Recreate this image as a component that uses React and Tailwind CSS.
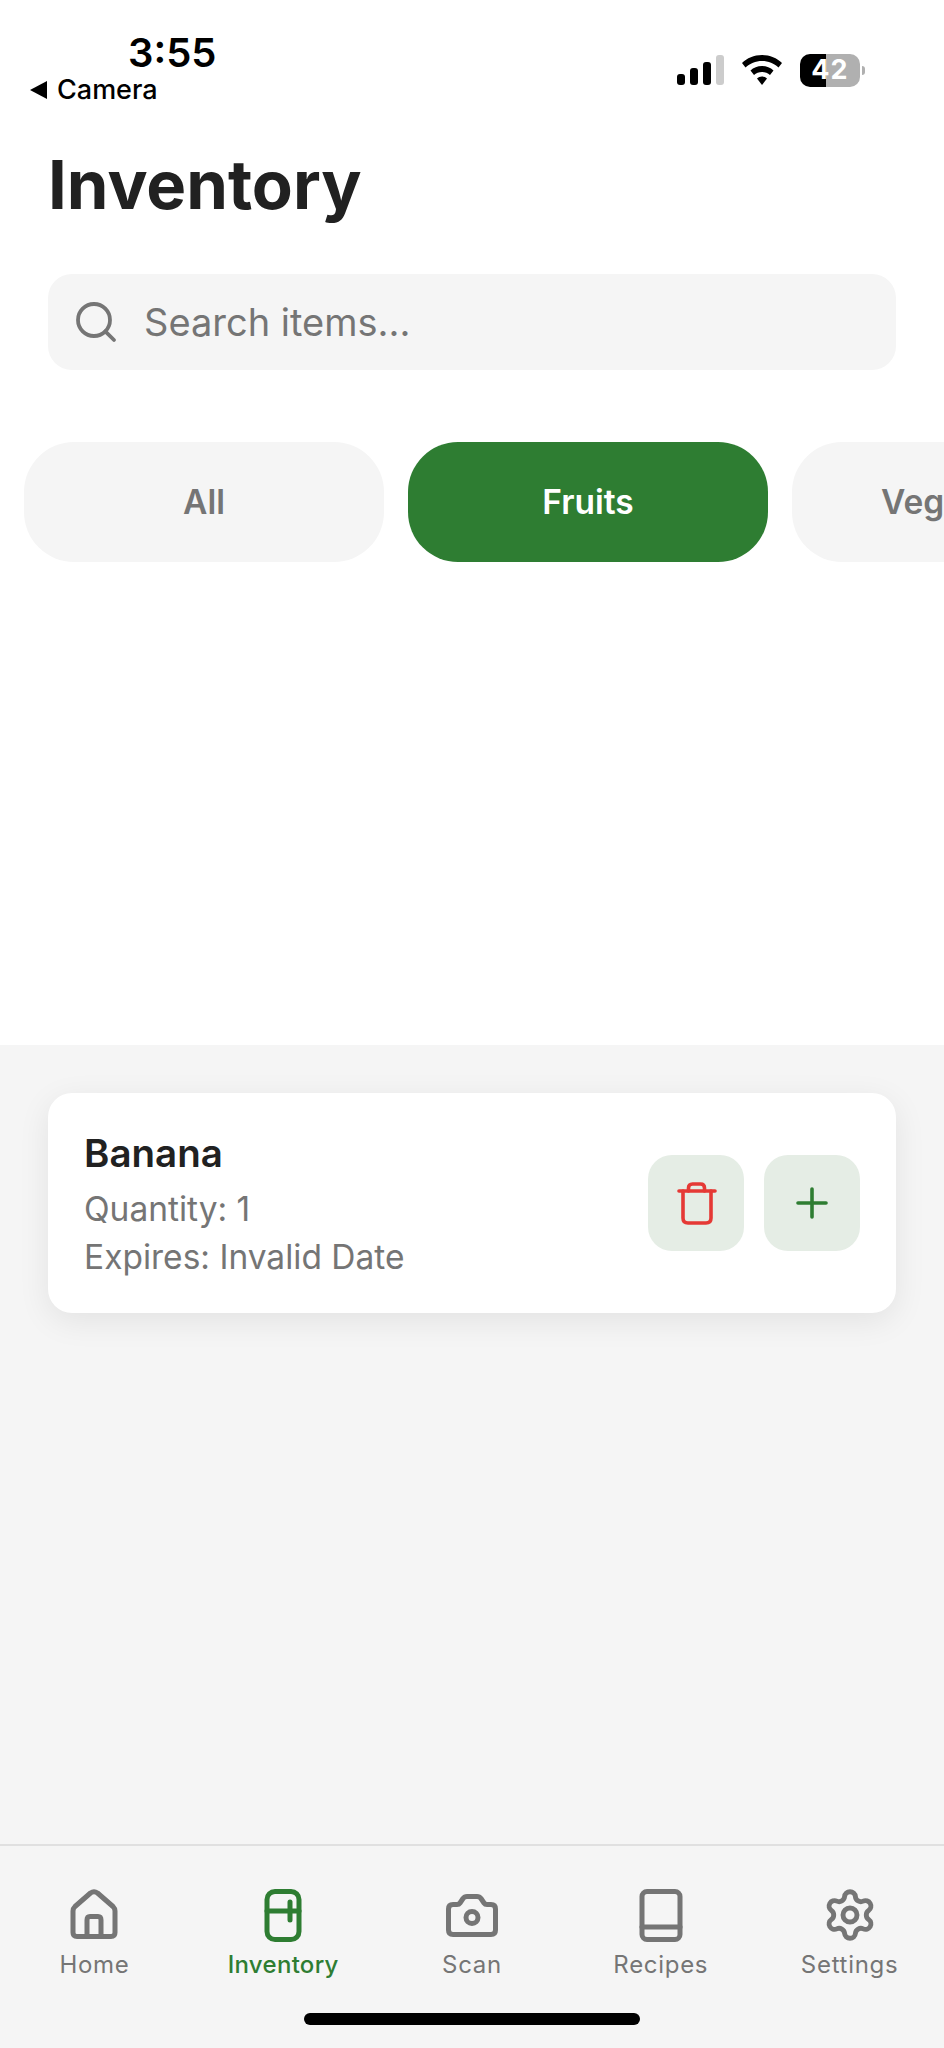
import { Search, Settings } from 'lucide-react';

const HomeIcon = () => (
    <svg width="56" height="56" viewBox="0 0 56 56" fill="none" stroke="#757575" strokeWidth="5" strokeLinecap="round" strokeLinejoin="round">
        <path d="M24.5 6 L9 19.5 Q7 21.5 7 24 V45.5 Q7 49.5 11 49.5 H45 Q49 49.5 49 45.5 V24 Q49 21.5 47 19.5 L31.5 6 Q28 3.5 24.5 6 Z" />
        <path d="M21 49.5 V33 Q21 29.5 24 29.5 H32 Q35 29.5 35 33 V49.5" />
    </svg>
);

const FridgeIcon = () => (
    <svg width="56" height="56" viewBox="0 0 56 56" fill="none" stroke="#2e7d32" strokeWidth="5" strokeLinecap="round" strokeLinejoin="round">
        <rect x="12" y="4.5" width="32" height="48" rx="8" />
        <path d="M12 24 H44" />
        <path d="M35 15 V33" />
    </svg>
);

const CameraIcon = () => (
    <svg width="56" height="56" viewBox="0 0 56 56" fill="none" stroke="#757575" strokeWidth="5" strokeLinecap="round" strokeLinejoin="round">
        <path d="M9 17.5 H13 Q15 17.5 16 16 L19 11.5 Q20.5 9.5 23 9.5 H33 Q35.5 9.5 37 11.5 L40 16 Q41 17.5 43 17.5 H47 Q51.5 17.5 51.5 22 V43 Q51.5 47.5 47 47.5 H9 Q4.5 47.5 4.5 43 V22 Q4.5 17.5 9 17.5 Z" />
        <circle cx="28" cy="30.5" r="6" />
    </svg>
);

const BookIcon = () => (
    <svg width="56" height="56" viewBox="0 0 56 56" fill="none" stroke="#757575" strokeWidth="5" strokeLinecap="round" strokeLinejoin="round">
        <rect x="9" y="4.5" width="38" height="48" rx="5" />
        <path d="M9 40 H47" />
    </svg>
);

const TrashIcon = () => (
    <svg width="48" height="48" viewBox="0 0 48 48" fill="none" stroke="#e53935" strokeWidth="3.6" strokeLinecap="round" strokeLinejoin="round">
        <path d="M7 12 H43" />
        <path d="M11 12 V39 Q11 44 16 44 H34 Q39 44 39 39 V12" />
        <path d="M16.5 12 V9 Q16.5 5 20.5 5 H28.5 Q32.5 5 32.5 9 V12" />
    </svg>
);

const PlusIcon = () => (
    <svg width="48" height="48" viewBox="0 0 48 48" fill="none" stroke="#2e7d32" strokeWidth="3.6" strokeLinecap="round">
        <path d="M24 10 V38" />
        <path d="M10 24 H38" />
    </svg>
);

const WifiIcon = () => (
    <svg width="40" height="30" viewBox="0 0 40 30" fill="#000">
        <path d="M20 0 C28 0 35 3 40 8 L36.500 12.500 C32 8.500 26.500 6 20 6 C13.500 6 8 8.500 3.500 12.500 L0 8 C5 3 12 0 20 0 Z" />
        <path d="M20 11 C24.500 11 28.500 12.700 31.500 15.500 L28 20 C26 18.200 23 17 20 17 C17 17 14 18.200 12 20 L8.500 15.500 C11.500 12.700 15.500 11 20 11 Z" />
        <path d="M20 21.500 C22 21.500 23.800 22.200 25 23.500 L20 30 L15 23.500 C16.200 22.200 18 21.500 20 21.500 Z" />
    </svg>
);

const tabs = [
    { label: 'Home', icon: <HomeIcon /> },
    { label: 'Inventory', icon: <FridgeIcon />, active: true },
    { label: 'Scan', icon: <CameraIcon /> },
    { label: 'Recipes', icon: <BookIcon /> },
    { label: 'Settings', icon: <Settings size={56} strokeWidth={2.1} className="text-[#757575]" /> },
];

const App = () => {
    return (
        <div className="w-[944px] h-[2048px] flex flex-col overflow-hidden bg-white font-['Inter',sans-serif]">
            {/* Header */}
            <div className="h-[1045px] shrink-0 bg-white">
                {/* Status bar */}
                <div className="flex justify-between pt-[30px] h-[110px]">
                    <div>
                        <div className="ml-[128px] text-[40px] leading-[46px] font-semibold text-black">3:55</div>
                        <div className="ml-[30px] flex items-center gap-[10px] text-[27px] leading-[28px] font-medium text-black">
                            <span className="w-0 h-0 border-y-[9px] border-y-transparent border-r-[17px] border-r-black"></span>
                            Camera
                        </div>
                    </div>
                    <div className="flex items-center gap-[18px] mr-[79px]">
                        <div className="flex items-end gap-[5px] h-[30px]">
                            <span className="w-[8px] h-[11px] rounded-[3px] bg-black"></span>
                            <span className="w-[8px] h-[17px] rounded-[3px] bg-black"></span>
                            <span className="w-[8px] h-[23px] rounded-[3px] bg-black"></span>
                            <span className="w-[8px] h-[30px] rounded-[3px] bg-[#cccccc]"></span>
                        </div>
                        <WifiIcon />
                        <div className="flex items-center gap-[2px]">
                            <div className="w-[60px] h-[33px] rounded-[10px] flex items-center justify-center text-[27px] tracking-[1px] font-bold text-white bg-[linear-gradient(90deg,#000_43%,#b0b0b0_43%)]">
                                42
                            </div>
                            <span className="w-[3px] h-[9px] rounded-r-full bg-[#b0b0b0]"></span>
                        </div>
                    </div>
                </div>

                <h1 className="mt-[36px] ml-[48px] text-[67px] leading-[78px] font-bold text-[#212121]">Inventory</h1>

                {/* Search */}
                <div className="mt-[50px] mx-[48px] h-[96px] rounded-[24px] bg-[#f5f5f5] flex items-center pl-[24px] gap-[24px]">
                    <Search size={48} strokeWidth={1.9} className="text-[#757575]" />
                    <span className="text-[38px] text-[#757575]">Search items...</span>
                </div>

                {/* Categories */}
                <div className="mt-[72px] pl-[24px] flex gap-[24px] overflow-hidden">
                    <div className="w-[360px] h-[120px] shrink-0 rounded-[50px] bg-[#f5f5f5] flex items-center justify-center text-[33.500px] font-semibold text-[#757575]">All</div>
                    <div className="w-[360px] h-[120px] shrink-0 rounded-[50px] bg-[#2e7d32] flex items-center justify-center text-[33.500px] font-semibold text-white">Fruits</div>
                    <div className="w-[360px] h-[120px] shrink-0 rounded-[50px] bg-[#f5f5f5] flex items-center justify-center text-[33.500px] font-semibold text-[#757575]">Vegetables</div>
                </div>
            </div>

            {/* List */}
            <div className="flex-1 bg-[#f5f5f5] pt-[48px] px-[48px]">
                <div className="h-[220px] rounded-[24px] bg-white shadow-[0_8px_32px_rgba(0,0,0,0.08)] flex items-center justify-between pl-[36px] pr-[36px]">
                    <div className="pt-[4px]">
                        <div className="text-[38.500px] leading-[46px] font-semibold text-[#212121]">Banana</div>
                        <div className="mt-[9px] text-[33.500px] leading-[48px] text-[#757575]">Quantity: 1</div>
                        <div className="text-[33.500px] leading-[48px] text-[#757575]">Expires: Invalid Date</div>
                    </div>
                    <div className="flex gap-[20px]">
                        <div className="w-[96px] h-[96px] rounded-[24px] bg-[#e5ede5] flex items-center justify-center"><TrashIcon /></div>
                        <div className="w-[96px] h-[96px] rounded-[24px] bg-[#e5ede5] flex items-center justify-center"><PlusIcon /></div>
                    </div>
                </div>
            </div>

            {/* Tab bar */}
            <div className="h-[204px] shrink-0 bg-[#f5f5f5] border-t-[2px] border-[#e0e0e0] flex flex-col items-center">
                <div className="w-full grid grid-cols-5 pt-[41px]">
                    {tabs.map((tab) => (
                        <div key={tab.label} className="flex flex-col items-center">
                            {tab.icon}
                            <span className={`mt-[6px] text-[24px] leading-[32px] ${tab.active ? 'text-[#2e7d32] font-medium tracking-[0.3px]' : 'text-[#757575] tracking-[0.7px]'}`}>
                                {tab.label}
                            </span>
                        </div>
                    ))}
                </div>
                <div className="mt-[32px] w-[336px] h-[12px] rounded-full bg-black"></div>
            </div>
        </div>
    );
};

export default App;
